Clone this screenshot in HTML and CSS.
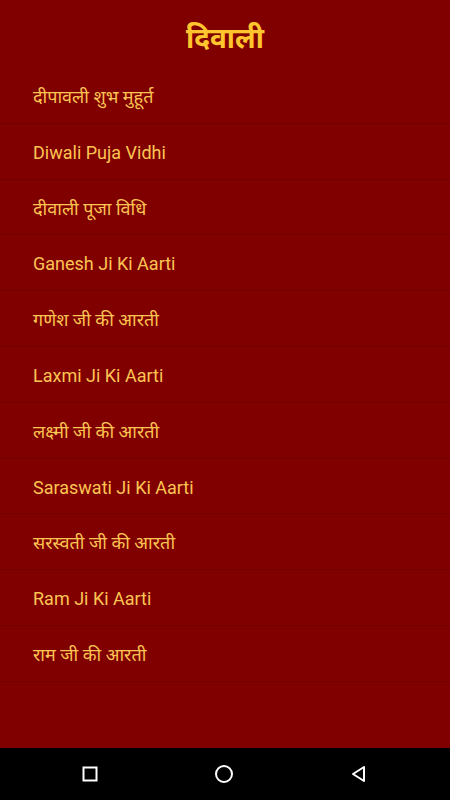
FILE: index.html
```html
<!DOCTYPE html>
<html lang="hi">
<head>
    <meta charset="UTF-8">
    <meta name="viewport" content="width=device-width, initial-scale=1.0">
    <title>दिवाली</title>
    <link rel="stylesheet" href="styles.css">
</head>
<body>
    <div class="screen">
        <header class="title">दिवाली</header>
        <ul class="list">
            <li>दीपावली शुभ मुहूर्त</li>
            <li>Diwali Puja Vidhi</li>
            <li>दीवाली पूजा विधि</li>
            <li>Ganesh Ji Ki Aarti</li>
            <li>गणेश जी की आरती</li>
            <li>Laxmi Ji Ki Aarti</li>
            <li>लक्ष्मी जी की आरती</li>
            <li>Saraswati Ji Ki Aarti</li>
            <li>सरस्वती जी की आरती</li>
            <li>Ram Ji Ki Aarti</li>
            <li>राम जी की आरती</li>
        </ul>
    </div>
    <nav class="navbar">
        <svg width="16" height="16" viewBox="0 0 16 16"><rect x="1.5" y="1.5" width="13" height="13" fill="none" stroke="#fff" stroke-width="2"/></svg>
        <svg width="20" height="20" viewBox="0 0 20 20"><circle cx="10" cy="10" r="8" fill="none" stroke="#fff" stroke-width="2"/></svg>
        <svg width="18" height="18" viewBox="0 0 18 18"><path d="M14 2 L3 9 L14 16 Z" fill="none" stroke="#fff" stroke-width="2" stroke-linejoin="round"/></svg>
    </nav>
</body>
</html>
```

FILE: styles.css
```css
html, body {
    margin: 0;
    padding: 0;
    height: 100%;
}

body {
    display: flex;
    flex-direction: column;
    background-color: #800000;
    font-family: Roboto, "Noto Sans", sans-serif;
}

.screen {
    flex: 1;
}

.title {
    height: 68px;
    box-sizing: border-box;
    padding-top: 20px;
    text-align: center;
    color: #ffc52e;
    font-size: 28px;
    font-weight: bold;
    line-height: 38px;
}

.list {
    list-style: none;
    margin: 0;
    padding: 0;
}

.list li {
    height: 55.8px;
    box-sizing: border-box;
    padding-left: 33px;
    border-bottom: 1px solid #730000;
    color: #fcc453;
    font-size: 18px;
    line-height: 58px;
}

.navbar {
    height: 52px;
    background-color: #000;
    display: flex;
    align-items: center;
    justify-content: center;
    gap: 116px;
}
```
